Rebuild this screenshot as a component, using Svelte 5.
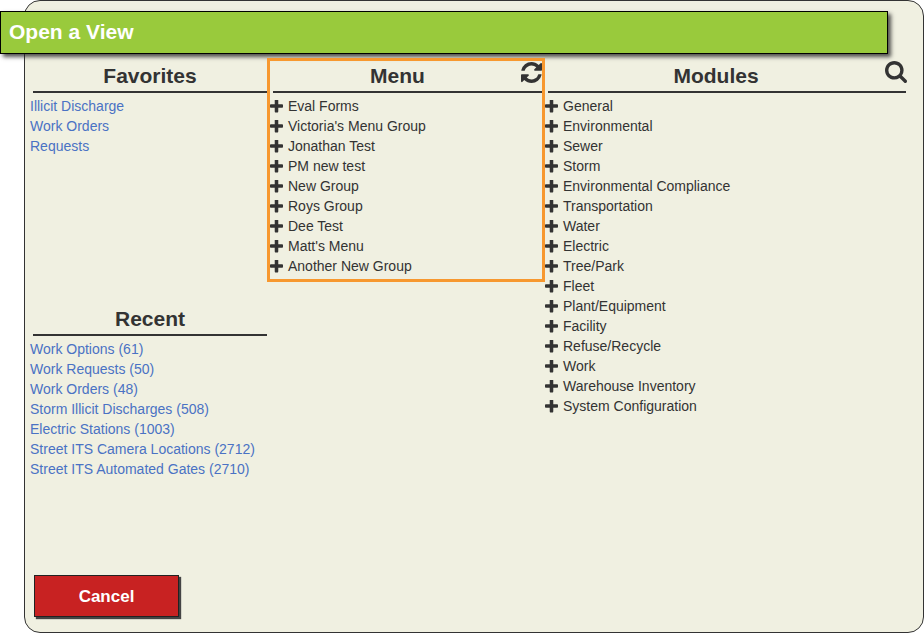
<script>
  const favorites = ['Illicit Discharge', 'Work Orders', 'Requests'];
  const recent = ['Work Options (61)', 'Work Requests (50)', 'Work Orders (48)', 'Storm Illicit Discharges (508)', 'Electric Stations (1003)', 'Street ITS Camera Locations (2712)', 'Street ITS Automated Gates (2710)'];
  const menu = ['Eval Forms', "Victoria's Menu Group", 'Jonathan Test', 'PM new test', 'New Group', 'Roys Group', 'Dee Test', "Matt's Menu", 'Another New Group'];
  const modules = ['General', 'Environmental', 'Sewer', 'Storm', 'Environmental Compliance', 'Transportation', 'Water', 'Electric', 'Tree/Park', 'Fleet', 'Plant/Equipment', 'Facility', 'Refuse/Recycle', 'Work', 'Warehouse Inventory', 'System Configuration'];
  const plus = 'M1600 736v192q0 40-28 68t-68 28h-416v416q0 40-28 68t-68 28h-192q-40 0-68-28t-28-68v-416h-416q-40 0-68-28t-28-68v-192q0-40 28-68t68-28h416v-416q0-40 28-68t68-28h192q40 0 68 28t28 68v416h416q40 0 68 28t28 68z';
</script>

{#snippet tree(items)}
  <ul class="list">
    {#each items as item}
      <li class="tree-row">
        <svg class="plus" viewBox="192 192 1408 1408" aria-hidden="true"><path d={plus} /></svg>
        <span>{item}</span>
      </li>
    {/each}
  </ul>
{/snippet}

{#snippet links(items)}
  <ul class="list">
    {#each items as item}
      <li class="link-row"><a href="#top">{item}</a></li>
    {/each}
  </ul>
{/snippet}

<div class="panel">
  <header class="title"><h1>Open a View</h1></header>

  <div class="columns">
    <section class="col-left">
      <div class="block">
        <h2>Favorites</h2>
        {@render links(favorites)}
      </div>
      <div class="block recent">
        <h2>Recent</h2>
        {@render links(recent)}
      </div>
    </section>

    <section class="col-menu">
      <h2>Menu</h2>
      <svg class="tool refresh" viewBox="128 128 1536 1536" aria-label="Refresh"><path d="M1639 1056q0 5-1 7-64 268-268 434.5t-478 166.5q-146 0-282.5-55t-243.5-157l-129 129q-19 19-45 19t-45-19-19-45v-448q0-26 19-45t45-19h448q26 0 45 19t19 45-19 45l-137 137q71 66 161 102t187 36q134 0 250-65t186-179q11-17 53-117 8-23 30-23h192q13 0 22.5 9.5t9.5 22.5zm25-800v448q0 26-19 45t-45 19h-448q-26 0-45-19t-19-45 19-45l138-138q-148-137-349-137-134 0-250 65t-186 179q-11 17-53 117-8 23-30 23h-199q-13 0-22.5-9.5t-9.5-22.5v-7q65-268 270-434.5t480-166.5q146 0 284 55.5t245 156.5l130-129q19-19 45-19t45 19 19 45z" /></svg>
      {@render tree(menu)}
    </section>

    <section class="col-modules">
      <h2>Modules</h2>
      <svg class="tool search" viewBox="64 128 1664 1664" aria-label="Search"><path d="M1216 832q0-185-131.5-316.5t-316.5-131.5-316.5 131.5-131.5 316.5 131.5 316.5 316.5 131.5 316.5-131.5 131.5-316.5zm512 832q0 52-38 90t-90 38q-54 0-90-38l-343-342q-179 124-399 124-143 0-273.5-55.5t-225-150-150-225-55.5-273.5 55.5-273.5 150-225 225-150 273.5-55.5 273.5 55.5 225 150 150 225 55.5 273.5q0 220-124 399l343 343q37 37 37 90z" /></svg>
      {@render tree(modules)}
    </section>
  </div>

  <button class="cancel" type="button">Cancel</button>
</div>

<style>
  :global(body) {
    margin: 0;
    background: #fff;
    font-family: "Liberation Sans", Arial, sans-serif;
  }
  .panel {
    box-sizing: border-box;
    width: 900px;
    height: 633px;
    margin-left: 24px;
    padding-top: 10px;
    background: #f0f0e1;
    border: 1px solid #333;
    border-radius: 16px;
    display: flex;
    flex-direction: column;
    color: #333;
  }
  .title {
    box-sizing: border-box;
    width: 888px;
    height: 43px;
    margin-left: -25px;
    padding: 0 0 2px 8px;
    background: #99ca3c;
    border: 1px solid #000;
    box-shadow: 3px 3px 4px rgba(40, 40, 40, 0.8);
    display: flex;
    align-items: center;
    position: relative;
  }
  h1 {
    margin: 0;
    color: #fff;
    font-size: 21px;
    font-weight: 700;
  }
  .columns {
    display: flex;
    align-items: flex-start;
    margin-top: 4px;
    flex: 1;
  }
  h2 {
    margin: 0;
    height: 32px;
    line-height: 34px;
    font-size: 21px;
    font-weight: 700;
    text-align: center;
    border-bottom: 2px solid #333;
  }
  .list {
    list-style: none;
    margin: 3px 0 0;
    padding: 0;
    font-size: 14px;
    line-height: 20px;
  }
  .col-left {
    width: 237px;
    margin-left: 5px;
    flex: none;
  }
  .col-left h2 {
    margin-left: 3px;
  }
  .block {
    height: 243px;
    padding-top: 1px;
  }
  .block.recent {
    padding-top: 0;
  }
  .link-row a {
    color: #4a72c4;
    text-decoration: none;
  }
  .col-menu {
    box-sizing: border-box;
    width: 278px;
    height: 224px;
    flex: none;
    border: 3px solid #f7982f;
    position: relative;
  }
  .col-menu h2 {
    margin-left: 3px;
    padding-right: 20px;
    height: 30px;
    line-height: 30px;
  }
  .col-modules {
    width: 361px;
    flex: none;
    padding-top: 1px;
    position: relative;
  }
  .col-modules h2 {
    margin-left: 3px;
    padding-right: 22px;
  }
  .tree-row {
    display: flex;
    align-items: center;
  }
  .plus {
    width: 13px;
    height: 13px;
    margin-right: 5px;
    fill: #333;
    flex: none;
  }
  .tool {
    position: absolute;
    fill: #333;
  }
  .refresh {
    top: 1px;
    right: 0;
    width: 21px;
    height: 21px;
  }
  .search {
    top: 3px;
    right: -1px;
    width: 22px;
    height: 22px;
  }
  .cancel {
    box-sizing: border-box;
    width: 145px;
    height: 42px;
    margin: 0 0 15px 9px;
    padding: 2px 0 0;
    flex: none;
    align-self: flex-start;
    background: #c82222;
    color: #fff;
    border: 1px solid #222;
    box-shadow: 2px 2px 1px #444;
    font-family: inherit;
    font-size: 17px;
    font-weight: 700;
  }
</style>
